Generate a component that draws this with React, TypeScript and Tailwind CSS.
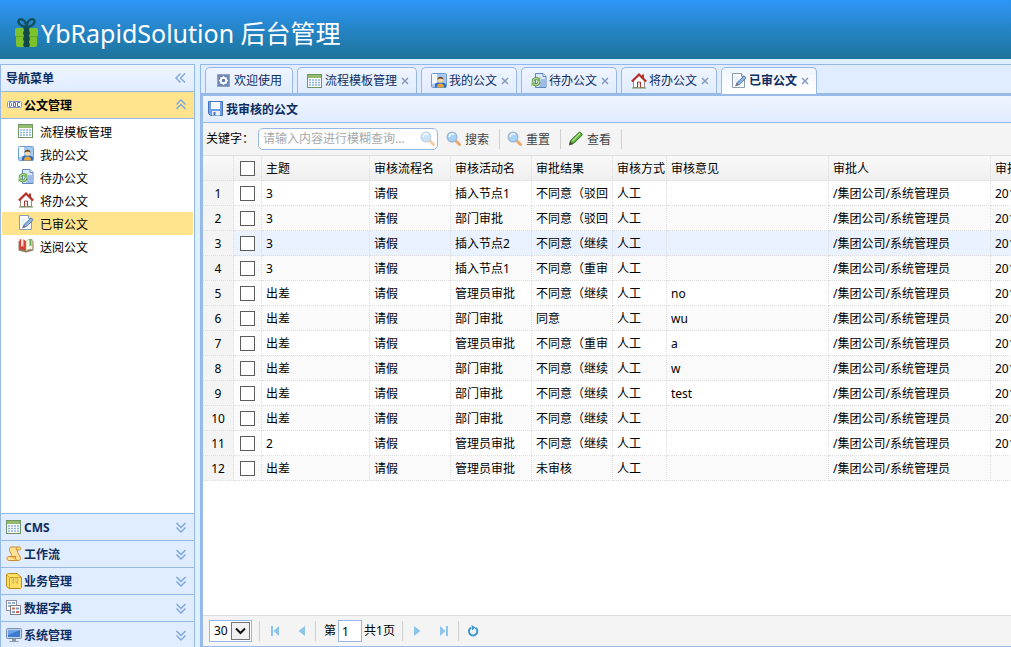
import type { ReactNode } from 'react';
import clsx from 'clsx';

const Icon = ({ children }: { children: ReactNode }) => (
  <svg viewBox="0 0 16 16" className="size-4 shrink-0" aria-hidden="true">
    {children}
  </svg>
);

const TableIcon = () => (
  <Icon>
    <rect x="0.5" y="1.5" width="14" height="13" fill="#fff" stroke="#6f9465" />
    <rect x="1" y="2" width="13" height="3" fill="#93bd6c" />
    <path d="M2 7h11M2 9.500h11M2 12h11" stroke="#86b4dc" strokeWidth="1.500" strokeDasharray="2 1" />
  </Icon>
);

const UserIcon = () => (
  <Icon>
    <rect x="0.500" y="0.500" width="15" height="14" rx="1" fill="#f4f9ff" stroke="#6f9bd1" />
    <path d="M6 1h9v10H6z" fill="#a5c9f2" />
    <path d="M1 11l4-1v4H1z" fill="#a9c9ee" />
    <path d="M4 14.500V12c0-2 2-2.500 5-2.500s6 .5 6 2.500v2.500z" fill="#2c6cc0" />
    <path d="M6 14.500c0-3 1-4 3.500-4s3.500 1 3.500 4z" fill="#e8a23a" />
    <circle cx="9.500" cy="7" r="2.600" fill="#f7d3a6" />
    <path d="M6.500 6.800C6.300 2.800 12.700 2.800 12.500 6.800c-2-1.600-4-1.600-6 0z" fill="#6b3f15" />
  </Icon>
);

const PageRefreshIcon = () => (
  <Icon>
    <path d="M4.500 0.500h7.500l3 3v11h-10.500z" fill="#dce9fa" stroke="#5f86bf" />
    <path d="M12 0.500v3h3" fill="#fff" stroke="#5f86bf" />
    <path d="M10 6h4v8h-6z" fill="#9dbde8" />
    <path d="M2 8.500a3.200 3.200 0 0 1 5.500-2M8 8.500a3.200 3.200 0 0 1-5.500 2.300" fill="none" stroke="#5b8f4c" strokeWidth="3" />
    <path d="M2 8.500a3.200 3.200 0 0 1 5.500-2M8 8.500a3.200 3.200 0 0 1-5.500 2.300" fill="none" stroke="#b3d896" strokeWidth="1.300" />
    <path d="M9.300 4v4H5.500zM0.500 13.300v-4h4z" fill="#7fb463" />
  </Icon>
);

const HouseIcon = () => (
  <Icon>
    <path d="M11 1.500h2V5h-2z" fill="#b3342b" />
    <path d="M2.500 8v6.500h11V8L8 2.500z" fill="#fff" stroke="#9b8580" />
    <path d="M6.500 14.500V9h3v5.500" fill="#f3e4df" stroke="#a33a34" />
    <path d="M0.800 8.500L8 1.500l7.200 7" fill="none" stroke="#b92f28" strokeWidth="2" />
    <path d="M1 15h14" stroke="#6d8d55" />
  </Icon>
);

const PageEditIcon = () => (
  <Icon>
    <path d="M1.500 0.500h9l3 3v11h-12z" fill="#fbfdff" stroke="#8b9bb0" />
    <path d="M10.500 0.500v3h3" fill="#e5edf7" stroke="#8b9bb0" />
    <path d="M3 4h5M3 6h4M3 8h3" stroke="#dfe7f2" />
    <path d="M5 12.500l1.200-3.200 6.300-5.800c1.300-.7 2.800.8 2.200 2L8.300 11.500z" fill="#8eb2e2" stroke="#4d6f9f" strokeWidth="0.800" />
    <path d="M4 13.500l1.800-3.800 2.200 2z" fill="#6f7580" />
  </Icon>
);

const BookIcon = () => (
  <Icon>
    <path d="M0.500 3L8 4.500 15.500 3v9.500L8 14.500 0.500 12.500z" fill="#8d7b60" />
    <path d="M1.500 1.500C4 .8 6.500 1.500 8 3.500v9.500C6 11.500 4 11 1.500 11.500z" fill="#d33d34" />
    <path d="M3 1h2.500v8l-1.200-1.200L3 9z" fill="#f4dcd0" />
    <path d="M8 3.500c1.500-2 4-2.500 6.500-1.800v9.800c-2.500-.5-4.500 0-6.500 1.500z" fill="#fbf8ec" stroke="#b3a67e" strokeWidth="0.700" />
    <path d="M11.500 1h2v7.500l-1-1-1 1z" fill="#6aa656" />
  </Icon>
);

const DocIcon = () => (
  <Icon>
    <rect x="0.500" y="4.500" width="14" height="6" rx="1" fill="#fff" stroke="#8195cf" />
    <path d="M2.500 5.500h1l1 1v2l-1 1h-1zM6.500 5.500h2v4h-2zM13 5.500h-2.500v4H13" fill="none" stroke="#5470bd" />
  </Icon>
);

const ScriptIcon = () => (
  <Icon>
    <path d="M5 1h8.500c1.500 0 2 3 0 3H11c0 3 3.500 6 3.500 8.500 0 1.500-1 2-2 2H3c-2.500 0-3-4 0-4h3C6 8 3.500 6.500 3.500 3.500 3.500 2 4 1 5 1z" fill="#ffe193" stroke="#c98d2b" />
    <path d="M3 10.500h7c-1 1.500-.5 3 1 4M11 4c-1-.5-1-2 0-2.800" fill="#f6c45e" stroke="#c98d2b" />
  </Icon>
);

const PackageIcon = () => (
  <Icon>
    <path d="M0.500 1.500l2-1h8.500l4.500 4v10l-1 1H3l-2.500-2z" fill="#ffdf65" stroke="#c08b16" />
    <path d="M1 2l2.500 2.500H15M3.500 4.500V15" fill="none" stroke="#d9a32a" />
    <path d="M6 5v4l1.500 1.500V5M10 5v4l1.500 1.500V5" fill="#fff3bd" stroke="#d9a32a" strokeWidth="0.800" />
  </Icon>
);

const DictionaryIcon = () => (
  <Icon>
    <rect x="0.500" y="0.500" width="10" height="10" fill="#fff" stroke="#8e8e9c" />
    <path d="M2 3h3M6 3h3M2 6h2" stroke="#7295bd" strokeWidth="1.500" />
    <rect x="4.500" y="5.500" width="10" height="9" fill="#fff" stroke="#7e7e8c" />
    <path d="M6 8.500h3M10 12h3" stroke="#d36b52" strokeWidth="2" />
    <path d="M10 8.500h3M6 12h3" stroke="#7d9ec2" strokeWidth="2" />
  </Icon>
);

const MonitorIcon = () => (
  <Icon>
    <rect x="0.500" y="1.500" width="15" height="10" rx="1" fill="#c6d5e8" stroke="#7c8fa9" />
    <path d="M2 3h12v7H2z" fill="#3d7bd0" />
    <path d="M2 3h12L2 8z" fill="#6fa5e8" />
    <path d="M6 12h4v2h2.500v1h-9v-1H6z" fill="#8c98a6" />
  </Icon>
);

const GearIcon = () => (
  <Icon>
    <rect x="1.500" y="1.500" width="12" height="12" fill="#6f88b4" stroke="#8fa3c6" />
    <path d="M7.500 3v9M3 7.500h9M4.500 4.500l6 6M10.500 4.500l-6 6" stroke="#fff" strokeWidth="1.400" />
    <circle cx="7.500" cy="7.500" r="2.700" fill="#5b78a8" stroke="#fff" strokeWidth="1.800" />
  </Icon>
);

const SaveIcon = () => (
  <Icon>
    <path d="M0.500 0.500h14v14H2.500l-2-2z" fill="#6f9ee2" stroke="#4674bd" />
    <path d="M3 1h9v7H3z" fill="#f6faff" />
    <path d="M4 10h8v4.500H4z" fill="#e6effb" />
    <path d="M5.500 11h2v3.500h-2z" fill="#4674bd" />
  </Icon>
);

const SearchIcon = () => (
  <Icon>
    <path d="M9.500 9.500l4 4" stroke="#e8ab6c" strokeWidth="3" strokeLinecap="round" />
    <circle cx="6" cy="6" r="4.800" fill="#a8d3f8" stroke="#9db8d5" strokeWidth="1.400" />
    <path d="M3.200 6a3 3 0 0 1 5-2.300" fill="none" stroke="#fff" strokeWidth="1.400" />
  </Icon>
);

const PencilIcon = () => (
  <Icon>
    <path d="M1.500 13.500l1-4L11 1.500c1-1 4 1.500 3 2.800L5.500 12.500z" fill="#5fb03c" stroke="#35791f" />
    <path d="M4.500 10l7.500-7.500" stroke="#b4e48e" strokeWidth="1.300" />
    <path d="M1 14.500l1.300-4 2.800 2.500z" fill="#4b4b3b" />
  </Icon>
);

const GiftLogo = () => (
  <svg viewBox="0 0 24 32" className="h-8 w-6 shrink-0" aria-hidden="true">
    <rect x="0" y="11" width="23" height="9" rx="2" fill="#7cc22e" />
    <rect x="1" y="18" width="21" height="12" rx="2" fill="#7cc22e" />
    <path d="M1 19.500h21" stroke="#67a92a" />
    <path d="M8 10h7l-1 3 1 3-1 3 1 3-1 3 1 3-1 2H9l-1-2 1-3-1-3 1-3-1-3 1-3z" fill="#124a4a" />
    <path d="M11.500 10C9 10 3 8 3.500 4c.5-3 7-3 8 6zM11.500 10c2.500 0 8.500-2 8-6-.5-3-7-3-8 6z" fill="none" stroke="#14505a" strokeWidth="2.400" />
  </svg>
);

const Chevrons = ({ dir }: { dir: 'left' | 'up' | 'down' }) => (
  <svg
    viewBox="0 0 16 16"
    className={clsx('size-4 shrink-0', dir === 'up' && 'rotate-90', dir === 'down' && '-rotate-90')}
    fill="none"
    stroke="#7aa5dc"
    strokeWidth="1.400"
    aria-hidden="true"
  >
    <path d="M7.500 3.500L3 8l4.500 4.500M12 3.500L7.500 8l4.500 4.500" />
  </svg>
);

const MENU = [
  { name: '流程模板管理', icon: TableIcon },
  { name: '我的公文', icon: UserIcon },
  { name: '待办公文', icon: PageRefreshIcon },
  { name: '将办公文', icon: HouseIcon },
  { name: '已审公文', icon: PageEditIcon, active: true },
  { name: '送阅公文', icon: BookIcon },
];

const SECTIONS = [
  { name: 'CMS', icon: TableIcon },
  { name: '工作流', icon: ScriptIcon },
  { name: '业务管理', icon: PackageIcon },
  { name: '数据字典', icon: DictionaryIcon },
  { name: '系统管理', icon: MonitorIcon },
];

const TABS = MENU.slice(0, 5);

const ROWS = [
  ['3', '插入节点1', '不同意（驳回）', '', '2014-05-12'],
  ['3', '部门审批', '不同意（驳回）', '', '2014-05-12'],
  ['3', '插入节点2', '不同意（继续）', '', '2014-05-12'],
  ['3', '插入节点1', '不同意（重审）', '', '2014-05-12'],
  ['出差', '管理员审批', '不同意（继续）', 'no', '2014-05-12'],
  ['出差', '部门审批', '同意', 'wu', '2014-05-12'],
  ['出差', '管理员审批', '不同意（重审）', 'a', '2014-05-12'],
  ['出差', '部门审批', '不同意（继续）', 'w', '2014-05-12'],
  ['出差', '部门审批', '不同意（继续）', 'test', '2014-05-12'],
  ['出差', '部门审批', '不同意（继续）', '', '2014-05-12'],
  ['2', '管理员审批', '不同意（继续）', '', '2014-05-12'],
  ['出差', '管理员审批', '未审核', '', ''],
];

const COLUMNS = ['主题', '审核流程名', '审核活动名', '审批结果', '审核方式', '审核意见', '审批人', '审批时间'];

const Checkbox = ({ label }: { label: string }) => (
  <input
    type="checkbox"
    aria-label={label}
    className="mx-auto block size-[15px] appearance-none border border-[#5c5c5c] bg-white checked:bg-[#5b8fdb]"
  />
);

const Separator = () => <div className="h-5 w-px shrink-0 bg-[#cfcfcf]" />;

function Sidebar() {
  return (
    <aside className="-mb-px flex w-[195px] shrink-0 flex-col border border-b-0 border-[#95b8e7] bg-white">
      <div className="flex h-[27px] shrink-0 items-center justify-between border-b border-[#95b8e7] bg-linear-to-b from-[#eff5ff] to-[#e0ecff] pr-[5px] pl-[5px]">
        <h2 className="pt-[2px] font-bold text-[#0e2d5f]">导航菜单</h2>
        <button type="button" aria-label="收起">
          <Chevrons dir="left" />
        </button>
      </div>
      <button
        type="button"
        className="flex h-[27px] shrink-0 items-center border-b border-[#95b8e7] bg-[#ffe48d] pr-[5px] pl-[6px] font-bold text-black"
      >
        <DocIcon />
        <span className="ml-px pt-[2px]">公文管理</span>
        <span className="ml-auto">
          <Chevrons dir="up" />
        </span>
      </button>
      <ul className="flex-1 p-px">
        {MENU.map(({ name, icon: ItemIcon, active }) => (
          <li key={name}>
            <a href="#" className={clsx('flex h-[23px] items-start gap-[6px] pt-[3px] pl-4', active && 'bg-[#ffe48d]')}>
              <ItemIcon />
              <span className="pt-[2px]">{name}</span>
            </a>
          </li>
        ))}
      </ul>
      {SECTIONS.map(({ name, icon: SectionIcon }) => (
        <button
          key={name}
          type="button"
          className="flex h-[27px] shrink-0 items-center border-t border-[#95b8e7] bg-[#e0ecff] pr-[5px] pl-[5px] font-bold text-[#0e2d5f]"
        >
          <SectionIcon />
          <span className="ml-[2px] pt-[2px]">{name}</span>
          <span className="ml-auto">
            <Chevrons dir="down" />
          </span>
        </button>
      ))}
    </aside>
  );
}

function Tabs() {
  const tab = 'flex h-[26px] shrink-0 items-center rounded-t-[5px] border border-b-0 border-[#95b8e7]';
  return (
    <nav className="flex h-[30px] shrink-0 items-end gap-1 border-t border-b border-t-[#95b8e7] border-b-[#95b8e7] bg-[#e0ecff] pl-1 text-[#0e2d5f]">
      <button type="button" className={clsx(tab, 'gap-[2px] bg-linear-to-b from-[#eff5ff] to-[#e0ecff] pr-[10px] pl-[10px]')}>
        <GearIcon />
        欢迎使用
      </button>
      {TABS.map(({ name, icon: TabIcon, active }) => (
        <div
          key={name}
          className={clsx(
            tab,
            'pr-[7px] pl-[9px]',
            active ? '-mb-px h-[27px] bg-linear-to-b from-[#eff5ff] to-white font-bold' : 'bg-linear-to-b from-[#eff5ff] to-[#e0ecff]',
          )}
        >
          <button type="button" className="flex items-center gap-[2px]">
            <TabIcon />
            {name}
          </button>
          <button type="button" aria-label={`关闭${name}`} className="ml-1">
            <svg viewBox="0 0 8 8" className="size-2" stroke="#8396b8" strokeWidth="1.400">
              <path d="M1 1l6 6M7 1L1 7" />
            </svg>
          </button>
        </div>
      ))}
    </nav>
  );
}

function Toolbar() {
  const button = 'flex items-center gap-[3px] pr-[10px] pl-[7px] text-[#444]';
  return (
    <div className="flex h-[33px] shrink-0 items-center border-b border-[#ddd] bg-[#f4f4f4] pl-[3px] whitespace-nowrap">
      <label htmlFor="keyword">关键字：</label>
      <div className="mr-px ml-1 flex h-[22px] w-[180px] shrink-0 items-center rounded-[5px] border border-[#95b8e7] bg-white pr-px pl-1">
        <input
          id="keyword"
          placeholder="请输入内容进行模糊查询..."
          className="min-w-0 flex-1 outline-none placeholder:text-[#a9a9a9]"
        />
        <button type="button" aria-label="查询" className="opacity-60">
          <SearchIcon />
        </button>
      </div>
      <button type="button" className={button}>
        <SearchIcon />
        <span className="pt-px">搜索</span>
      </button>
      <Separator />
      <button type="button" className={button}>
        <SearchIcon />
        <span className="pt-px">重置</span>
      </button>
      <Separator />
      <button type="button" className={button}>
        <PencilIcon />
        <span className="pt-px">查看</span>
      </button>
      <Separator />
    </div>
  );
}

function Grid() {
  const line = 'border-r border-b border-dotted border-[#ddd]';
  return (
    <div className="min-h-0 flex-1 overflow-hidden">
      <table className="w-[1009px] table-fixed border-separate border-spacing-0 text-left whitespace-nowrap">
        <colgroup>
          <col className="w-[31px]" />
          <col className="w-[28px]" />
          <col className="w-[108px]" />
          <col className="w-[81px]" />
          <col className="w-[81px]" />
          <col className="w-[81px]" />
          <col className="w-[54px]" />
          <col className="w-[162px]" />
          <col className="w-[162px]" />
          <col />
        </colgroup>
        <thead>
          <tr className="h-[25px] bg-linear-to-b from-[#f9f9f9] to-[#efefef]">
            <th className={line} />
            <th className={line}>
              <Checkbox label="全选" />
            </th>
            {COLUMNS.map((name) => (
              <th key={name} className={clsx(line, 'pt-[2px] pl-1 font-normal')}>
                {name}
              </th>
            ))}
          </tr>
        </thead>
        <tbody>
          {ROWS.map(([title, activity, result, opinion, time], i) => (
            <tr key={i} className={clsx('h-[25px]', i === 2 ? 'bg-[#eaf2ff]' : i % 2 && 'bg-[#fafafa]')}>
              <td className={clsx(line, 'bg-[#f4f4f4] pt-[2px] text-center')}>{i + 1}</td>
              <td className={line}>
                <Checkbox label={`选择第${i + 1}行`} />
              </td>
              {[title, '请假', activity, result, '人工', opinion, '/集团公司/系统管理员', time].map((text, c) => (
                <td key={c} className={clsx(line, 'px-1 pt-[2px]')}>
                  <div className="overflow-hidden">{text}</div>
                </td>
              ))}
            </tr>
          ))}
        </tbody>
      </table>
    </div>
  );
}

function Pager() {
  const button = 'flex w-[27px] shrink-0 justify-center';
  return (
    <footer className="flex h-[31px] shrink-0 items-center border-t border-[#ddd] bg-[#f4f4f4] pl-[6px] whitespace-nowrap">
      <div className="relative mr-[7px]">
        <select
          aria-label="每页条数"
          defaultValue="30"
          className="block h-[22px] w-[43px] appearance-none border border-[#95b8e7] bg-white pl-1"
        >
          <option>10</option>
          <option>20</option>
          <option>30</option>
        </select>
        <svg viewBox="0 0 19 18" className="pointer-events-none absolute top-[2px] right-[2px] h-[18px] w-[19px]" aria-hidden="true">
          <rect x="0.500" y="0.500" width="18" height="17" fill="#f0f0f0" stroke="#777" />
          <path d="M5 6.500l4.500 4.500L14 6.500" fill="none" stroke="#111" strokeWidth="2" />
        </svg>
      </div>
      <Separator />
      <button type="button" aria-label="首页" className={clsx(button, 'ml-px')}>
        <svg viewBox="0 0 10 10" className="size-[10px]" fill="#8cc4ea">
          <path d="M1 0h2v10H1zM9 0v10L3.500 5z" />
        </svg>
      </button>
      <button type="button" aria-label="上一页" className={button}>
        <svg viewBox="0 0 10 10" className="size-[10px]" fill="#8cc4ea">
          <path d="M8 0v10L1.500 5z" />
        </svg>
      </button>
      <Separator />
      <label className="ml-2 flex items-center gap-[2px]">
        第
        <input defaultValue="1" className="h-[22px] w-6 border border-[#95b8e7] bg-white pl-[3px] outline-none" />
      </label>
      <span className="mr-[7px] ml-[2px]">共1页</span>
      <Separator />
      <button type="button" aria-label="下一页" className={clsx(button, 'ml-px')}>
        <svg viewBox="0 0 10 10" className="size-[10px]" fill="#8cc4ea">
          <path d="M2 0v10l6.500-5z" />
        </svg>
      </button>
      <button type="button" aria-label="末页" className={button}>
        <svg viewBox="0 0 10 10" className="size-[10px]" fill="#8cc4ea">
          <path d="M1 0v10l5.500-5zM7 0h2v10H7z" />
        </svg>
      </button>
      <Separator />
      <button type="button" aria-label="刷新" className={clsx(button, 'ml-px')}>
        <svg viewBox="0 0 12 12" className="size-3" aria-hidden="true">
          <path d="M8.500 2.800A4.200 4.200 0 1 1 4 2.600" fill="none" stroke="#3d97cc" strokeWidth="2" />
          <path d="M4.500 0l4 2.500-3.500 3z" fill="#3d97cc" />
        </svg>
      </button>
    </footer>
  );
}

export default function App() {
  return (
    <div className="flex h-screen flex-col overflow-hidden bg-[#dcf0ff] font-['Noto_Sans','Noto_Sans_CJK_SC',sans-serif] text-[12px] leading-4 text-black">
      <header className="flex h-[59px] shrink-0 items-center bg-linear-to-b from-[#2f96f8] to-[#1d7399] pt-[6px] pl-[15px]">
        <GiftLogo />
        <h1 className="ml-[2px] text-[25px] leading-8 whitespace-nowrap text-white">YbRapidSolution 后台管理</h1>
      </header>
      <div className="flex min-h-0 flex-1 gap-[5px] pt-[5px]">
        <Sidebar />
        <main className="flex min-w-0 flex-1 flex-col border-l border-[#95b8e7]">
          <Tabs />
          <section className="flex min-h-0 flex-1 flex-col border-t-2 border-b border-l-2 border-[#99bbe8] bg-white">
            <div className="flex h-[27px] shrink-0 items-center gap-[2px] border-b border-[#95b8e7] bg-linear-to-b from-[#eff5ff] to-[#e0ecff] pl-[5px]">
              <SaveIcon />
              <h2 className="pt-[2px] font-bold text-[#0e2d5f]">我审核的公文</h2>
            </div>
            <Toolbar />
            <Grid />
            <Pager />
          </section>
        </main>
      </div>
    </div>
  );
}
